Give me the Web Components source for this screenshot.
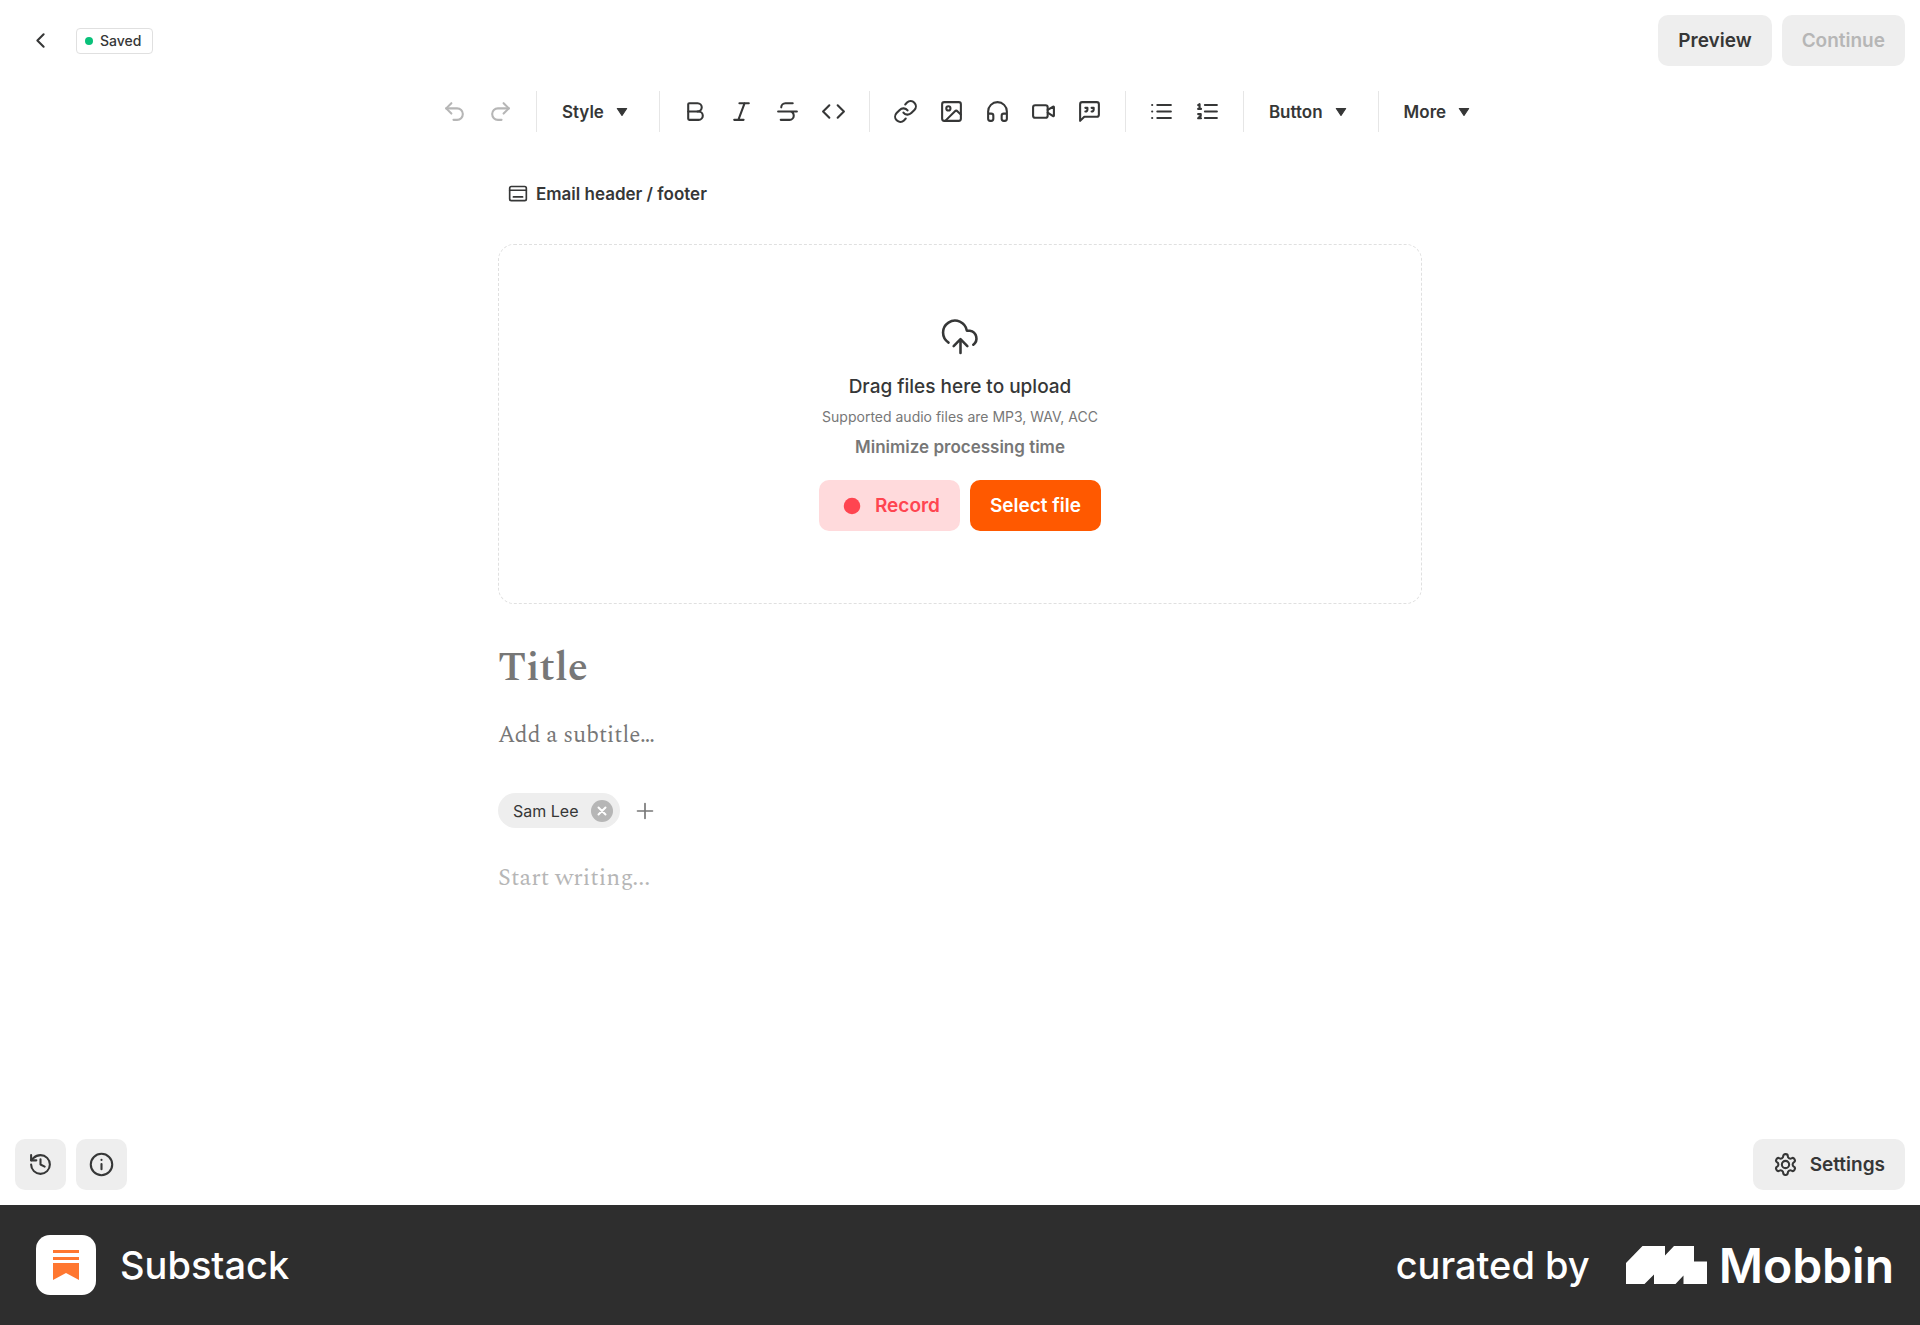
<!DOCTYPE html>
<html lang="en">
<head>
<meta charset="utf-8">
<meta name="viewport" content="width=device-width, initial-scale=1">
<title>Substack editor</title>
<style>
  html, body { margin: 0; min-height: 100%; }
  body {
    --ink: #363737;
    --muted: #777;
    --faint: #b6b6b6;
    --fill: #eee;
    --line: #e6e6e6;
    --accent: #ff5900;
    background: #fff;
    color: var(--ink);
    font-family: Inter, "Liberation Sans", sans-serif;
    font-size: 16px;
  }
</style>
</head>
<body>
<post-editor></post-editor>

<script>
const ICONS = {
  back: '<path d="m15 18-6-6 6-6"/>',
  undo: '<path d="M9 14 4 9l5-5"/><path d="M4 9h10.500a5.500 5.500 0 0 1 0 11H11"/>',
  redo: '<path d="m15 14 5-5-5-5"/><path d="M20 9H9.500a5.500 5.500 0 0 0 0 11H13"/>',
  bold: '<path d="M5 12V5a1 1 0 0 1 1-1h8a4 4 0 0 1 0 8H5"/><path d="M14 12h1a4 4 0 0 1 0 8H6a1 1 0 0 1-1-1v-7"/>',
  italic: '<path d="M19 4h-9M14 20H5M15 4 9 20"/>',
  strike: '<path d="M17 4H10a4 4 0 0 0-4 4M3 12h18M5.500 20H14a4 4 0 0 0 4-4c0-2.200-1.300-4-3.500-4"/>',
  code: '<path d="m16 18 6-6-6-6M8 6l-6 6 6 6"/>',
  link: '<path d="M10 13a5 5 0 0 0 7.540.54l3-3a5 5 0 0 0-7.070-7.070l-1.720 1.710"/><path d="M14 11a5 5 0 0 0-7.540-.54l-3 3a5 5 0 0 0 7.070 7.070l1.710-1.710"/>',
  image: '<rect x="3" y="3" width="18" height="18" rx="2"/><circle cx="9" cy="9" r="2"/><path d="m21 15-3.100-3.100a2 2 0 0 0-2.800 0L6 21"/>',
  audio: '<path d="M3 14h3a2 2 0 0 1 2 2v3a2 2 0 0 1-2 2H5a2 2 0 0 1-2-2v-7a9 9 0 0 1 18 0v7a2 2 0 0 1-2 2h-1a2 2 0 0 1-2-2v-3a2 2 0 0 1 2-2h3"/>',
  video: '<rect x="2" y="6" width="14" height="12" rx="2"/><path d="m16 13 5.220 3.480a.5.5 0 0 0 .78-.41V7.870a.5.5 0 0 0-.75-.43L16 10.500"/>',
  quote: '<path d="M21 15a2 2 0 0 1-2 2H7l-4 4V5a2 2 0 0 1 2-2h14a2 2 0 0 1 2 2z"/><path d="M8 8.500h2V10c0 1.200-.8 2-2 2M14 8.500h2V10c0 1.200-.8 2-2 2"/>',
  list: '<path d="M8 5.800h13M8 12h13M8 18.200h13M3 5.800h.1M3 12h.1M3 18.200h.1"/>',
  numbers: '<path d="M9.500 5.800H21M9.500 12H21M9.500 18.200H21M3 5.800l1.400-.8v4.500M3 9.500h2.800M3 14.500h2.500v1.700L3 18.500h2.800"/>',
  card: '<rect x="2" y="3" width="20" height="17" rx="2"/><path d="M2 7.500h20M6.500 15.500h11"/>',
  upload: '<path d="M12 13v8M8 17l4-4 4 4"/><path d="M5 15A7 7 0 1 1 15.700 8h1.800a4.600 4.600 0 0 1 2 8.200"/>',
  history: '<path d="M3 12a9 9 0 1 0 9-9 9.750 9.750 0 0 0-6.740 2.740L3 8"/><path d="M3 3v5h5M12 7v5l4 2"/>',
  info: '<circle cx="12" cy="12" r="10.300"/><path d="M12 11.500v5M12 7.500v.1"/>',
  gear: '<path d="M12.220 2h-.44a2 2 0 0 0-2 2v.18a2 2 0 0 1-1 1.730l-.43.25a2 2 0 0 1-2 0l-.15-.08a2 2 0 0 0-2.730.73l-.22.38a2 2 0 0 0 .73 2.730l.15.1a2 2 0 0 1 1 1.720v.51a2 2 0 0 1-1 1.740l-.15.09a2 2 0 0 0-.73 2.730l.22.38a2 2 0 0 0 2.730.73l.15-.08a2 2 0 0 1 2 0l.43.25a2 2 0 0 1 1 1.730V20a2 2 0 0 0 2 2h.44a2 2 0 0 0 2-2v-.18a2 2 0 0 1 1-1.730l.43-.25a2 2 0 0 1 2 0l.15.08a2 2 0 0 0 2.730-.73l.22-.39a2 2 0 0 0-.73-2.730l-.15-.08a2 2 0 0 1-1-1.740v-.5a2 2 0 0 1 1-1.740l.15-.09a2 2 0 0 0 .73-2.730l-.22-.38a2 2 0 0 0-2.730-.73l-.15.08a2 2 0 0 1-2 0l-.43-.25a2 2 0 0 1-1-1.730V4a2 2 0 0 0-2-2z"/><circle cx="12" cy="12" r="3.500"/>',
  close: '<path d="m5 5 14 14M19 5 5 19"/>',
  plus: '<path d="M12 3v18M3 12h18"/>',
  caret: '<path fill="currentColor" d="M4 6h16l-8 12z"/>',
  dot: '<circle fill="currentColor" cx="12" cy="12" r="11"/>'
};

function define(name, html, setup) {
  const template = document.createElement('template');
  template.innerHTML = html;
  customElements.define(name, class extends HTMLElement {
    constructor() {
      super();
      this.attachShadow({ mode: 'open' })
          .appendChild(template.content.cloneNode(true));
    }
    connectedCallback() {
      if (setup) setup(this, this.shadowRoot);
    }
  });
}

define('ui-icon', `
  <style>
    :host { display: inline-flex; flex: none; }
    svg {
      display: block;
      width: var(--icon-size, 25px);
      height: var(--icon-size, 25px);
      fill: none;
      stroke: currentColor;
      stroke-width: var(--icon-stroke, 2);
      stroke-linecap: round;
      stroke-linejoin: round;
      overflow: visible;
    }
  </style>
  <svg viewBox="0 0 24 24" aria-hidden="true"></svg>
`, (host, root) => {
  root.querySelector('svg').innerHTML = ICONS[host.getAttribute('name')];
});

// Filled button, with variants picked by the "kind" attribute
define('ui-button', `
  <style>
    :host { display: inline-flex; }
    button {
      display: flex;
      align-items: center;
      justify-content: center;
      gap: 12px;
      height: 51px;
      min-width: 51px;
      box-sizing: border-box;
      padding: 0 20px;
      border: 0;
      border-radius: 10px;
      background: var(--fill);
      color: var(--ink);
      font: inherit;
      font-size: 19px;
      font-weight: 600;
      white-space: nowrap;
      cursor: pointer;
    }
    button:disabled { color: var(--faint); cursor: default; }
    :host([kind="primary"]) button { background: var(--accent); color: #fff; }
    :host([kind="record"]) button { background: #ffdadc; color: #ff4550; }
    :host([kind="square"]) button { padding: 0; }
  </style>
  <button type="button"><slot></slot></button>
`, (host, root) => {
  const button = root.querySelector('button');
  button.disabled = host.hasAttribute('disabled');
  if (host.hasAttribute('label')) button.setAttribute('aria-label', host.getAttribute('label'));
});

define('tool-button', `
  <style>
    :host { display: inline-flex; }
    button {
      display: flex;
      align-items: center;
      justify-content: center;
      width: 41px;
      height: 41px;
      padding: 0;
      border: 0;
      border-radius: 5px;
      background: none;
      color: var(--ink);
      cursor: pointer;
    }
    button:hover { background: var(--fill); }
    button:disabled { background: none; color: var(--faint); }
  </style>
  <button type="button"><ui-icon></ui-icon></button>
`, (host, root) => {
  const button = root.querySelector('button');
  button.disabled = host.hasAttribute('disabled');
  button.setAttribute('aria-label', host.getAttribute('label'));
  root.querySelector('ui-icon').shadowRoot.querySelector('svg').innerHTML = ICONS[host.getAttribute('icon')];
});

define('tool-menu', `
  <style>
    :host { display: inline-flex; }
    button {
      display: flex;
      align-items: center;
      gap: 11px;
      height: 41px;
      padding: 0 15px 0 10px;
      border: 0;
      background: none;
      color: var(--ink);
      font: inherit;
      font-size: 17px;
      font-weight: 600;
      cursor: pointer;
    }
    ui-icon { --icon-size: 14px; }
  </style>
  <button type="button" aria-haspopup="menu"><slot></slot><ui-icon name="caret"></ui-icon></button>
`);

define('tool-group', `
  <style>
    :host { display: flex; align-items: center; gap: 5px; padding: 0 15px; border-right: 1px solid var(--line); }
    :host(:last-child) { border-right: 0; }
  </style>
  <slot></slot>
`);

define('format-toolbar', `
  <style>
    :host { display: flex; justify-content: center; padding: 25px 0; }
  </style>
  <tool-group>
    <tool-button icon="undo" label="Undo" disabled></tool-button>
    <tool-button icon="redo" label="Redo" disabled></tool-button>
  </tool-group>
  <tool-group><tool-menu>Style</tool-menu></tool-group>
  <tool-group>
    <tool-button icon="bold" label="Bold"></tool-button>
    <tool-button icon="italic" label="Italic"></tool-button>
    <tool-button icon="strike" label="Strikethrough"></tool-button>
    <tool-button icon="code" label="Code"></tool-button>
  </tool-group>
  <tool-group>
    <tool-button icon="link" label="Link"></tool-button>
    <tool-button icon="image" label="Image"></tool-button>
    <tool-button icon="audio" label="Audio"></tool-button>
    <tool-button icon="video" label="Video"></tool-button>
    <tool-button icon="quote" label="Quote"></tool-button>
  </tool-group>
  <tool-group>
    <tool-button icon="list" label="Bullet list"></tool-button>
    <tool-button icon="numbers" label="Numbered list"></tool-button>
  </tool-group>
  <tool-group><tool-menu>Button</tool-menu></tool-group>
  <tool-group><tool-menu>More</tool-menu></tool-group>
`);

define('save-status', `
  <style>
    :host {
      display: inline-flex;
      align-items: center;
      gap: 7px;
      height: 24px;
      padding: 0 11px 0 8px;
      border: 1px solid #e0e0e0;
      border-radius: 4px;
      font-size: 14px;
      font-weight: 500;
    }
    i { width: 8px; height: 8px; border-radius: 50%; background: #09c17a; }
  </style>
  <i></i><slot></slot>
`);

define('editor-header', `
  <style>
    :host { display: flex; align-items: center; gap: 10px; padding: 15px 15px 0; }
    a { display: flex; align-items: center; justify-content: center; width: 51px; height: 51px; color: var(--ink); }
    .space { flex: 1; }
  </style>
  <a href="#" aria-label="Back"><ui-icon name="back"></ui-icon></a>
  <save-status>Saved</save-status>
  <span class="space"></span>
  <ui-button>Preview</ui-button>
  <ui-button disabled>Continue</ui-button>
`);

define('audio-dropzone', `
  <style>
    :host {
      display: flex;
      flex-direction: column;
      align-items: center;
      justify-content: center;
      box-sizing: border-box;
      min-height: 360px;
      border: 1px dashed #e0e0e0;
      border-radius: 16px;
      text-align: center;
    }
    .cloud { --icon-size: 41px; --icon-stroke: 1.500; }
    h2, p, a { margin: 0; line-height: 30px; }
    h2 { margin-top: 14px; font-size: 19px; font-weight: 500; }
    p { color: var(--muted); font-size: 14px; }
    a { color: var(--muted); font-size: 17px; font-weight: 600; text-decoration: none; }
    .actions { display: flex; gap: 10px; margin-top: 18px; }
    .record { --icon-size: 18px; --icon-stroke: 0; margin: 0 2px 0 4px; }
  </style>
  <ui-icon class="cloud" name="upload"></ui-icon>
  <h2>Drag files here to upload</h2>
  <p>Supported audio files are MP3, WAV, ACC</p>
  <a href="#">Minimize processing time</a>
  <div class="actions">
    <ui-button kind="record"><ui-icon class="record" name="dot"></ui-icon>Record</ui-button>
    <ui-button kind="primary">Select file</ui-button>
  </div>
`);

define('author-chip', `
  <style>
    :host {
      display: inline-flex;
      align-items: center;
      gap: 13px;
      height: 35px;
      padding: 0 7px 0 15px;
      border-radius: 18px;
      background: var(--fill);
      font-size: 16px;
    }
    button {
      display: flex;
      align-items: center;
      justify-content: center;
      width: 22px;
      height: 22px;
      padding: 0;
      border: 0;
      border-radius: 50%;
      background: var(--faint);
      color: #fff;
      cursor: pointer;
    }
    ui-icon { --icon-size: 12px; --icon-stroke: 4; }
  </style>
  <slot></slot>
  <button type="button" aria-label="Remove author"><ui-icon name="close"></ui-icon></button>
`);

define('post-form', `
  <style>
    :host { display: block; box-sizing: border-box; width: 100%; max-width: 924px; margin: 0 auto; }
    button { display: flex; align-items: center; border: 0; background: none; color: inherit; cursor: pointer; }
    .email {
      gap: 8px;
      height: 41px;
      margin: 16px 0 30px;
      padding: 0 10px;
      font: inherit;
      font-size: 17px;
      font-weight: 600;
    }
    .email ui-icon { --icon-size: 20px; }
    input, textarea {
      display: block;
      box-sizing: border-box;
      width: 100%;
      padding: 0;
      border: 0;
      outline: 0;
      background: none;
      color: var(--ink);
      font-family: Spectral, "Liberation Serif", serif;
      resize: none;
    }
    input::placeholder { color: var(--muted); opacity: 1; }
    textarea::placeholder { color: var(--faint); opacity: 1; }
    .title { height: 52px; margin-top: 38px; font-size: 41px; font-weight: 600; }
    .subtitle { height: 36px; margin-top: 23px; font-size: 23px; }
    .authors { display: flex; align-items: center; gap: 11px; margin: 40px 0 32px; }
    .add { padding: 4px; color: var(--muted); }
    .add ui-icon { --icon-size: 20px; }
    .body { height: 200px; font-size: 24px; line-height: 36px; }
  </style>
  <button class="email" type="button"><ui-icon name="card"></ui-icon>Email header / footer</button>
  <audio-dropzone></audio-dropzone>
  <input class="title" aria-label="Title" placeholder="Title">
  <input class="subtitle" aria-label="Subtitle" placeholder="Add a subtitle…">
  <div class="authors">
    <author-chip>Sam Lee</author-chip>
    <button class="add" type="button" aria-label="Add author"><ui-icon name="plus"></ui-icon></button>
  </div>
  <textarea class="body" aria-label="Post body" placeholder="Start writing..."></textarea>
`);

define('editor-actions', `
  <style>
    :host { display: flex; gap: 10px; padding: 15px; }
    .space { flex: 1; }
  </style>
  <ui-button kind="square" label="Version history"><ui-icon name="history"></ui-icon></ui-button>
  <ui-button kind="square" label="Post info"><ui-icon name="info"></ui-icon></ui-button>
  <span class="space"></span>
  <ui-button><ui-icon name="gear"></ui-icon>Settings</ui-button>
`);

define('credit-bar', `
  <style>
    :host {
      display: flex;
      align-items: center;
      box-sizing: border-box;
      height: 120px;
      padding: 0 26px 0 36px;
      background: #2e2e2e;
      color: #fff;
      font-size: 38px;
      font-weight: 500;
    }
    svg { display: block; flex: none; }
    .app { display: flex; align-items: center; gap: 24px; flex: 1; }
    .by { margin-right: 36px; }
    .mark { margin-right: 12px; }
    .brand { font-size: 48px; font-weight: 600; }
  </style>
  <div class="app">
    <svg width="60" height="60" viewBox="0 0 60 60" aria-hidden="true">
      <rect width="60" height="60" rx="14" fill="#fff"/>
      <path fill="#ff7730" d="M17 15h26v3H17zM17 22h26v3H17zM17 28h26v17l-13-7-13 7z"/>
    </svg>
    <span>Substack</span>
  </div>
  <span class="by">curated by</span>
  <svg class="mark" width="81" height="38" viewBox="0 0 81 38" aria-hidden="true">
    <path fill="#fff" d="M0 17 16.500 0H39v9.500L48 0h20v15.500h13V38H57.500v-8.500l-8 8.500H28v-9.500L18.500 38H0z"/>
  </svg>
  <span class="brand">Mobbin</span>
`);

define('post-editor', `
  <style>
    :host { display: flex; flex-direction: column; min-height: 100vh; }
    post-form { flex: 1; }
  </style>
  <editor-header></editor-header>
  <format-toolbar></format-toolbar>
  <post-form></post-form>
  <editor-actions></editor-actions>
  <credit-bar></credit-bar>
`);
</script>
</body>
</html>
